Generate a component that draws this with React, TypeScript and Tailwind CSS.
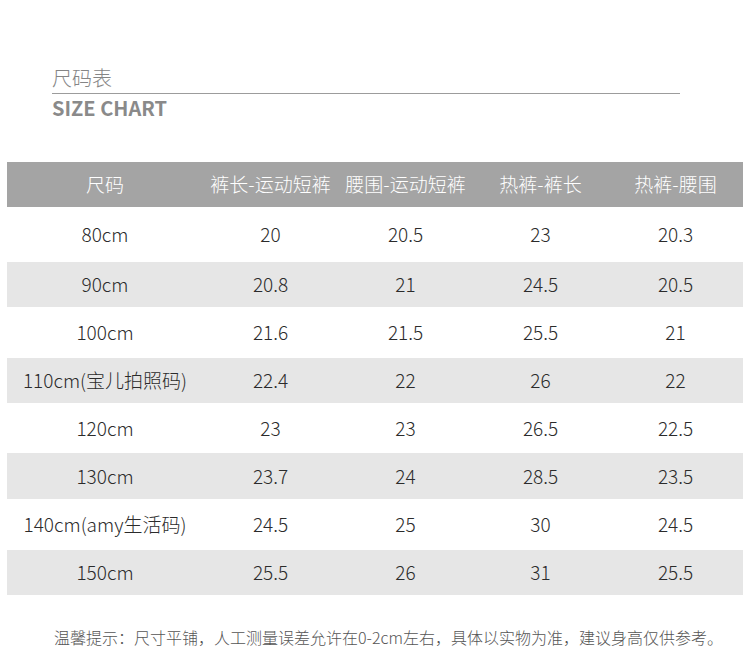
const headers = ["尺码", "裤长-运动短裤", "腰围-运动短裤", "热裤-裤长", "热裤-腰围"];

const rows: { cells: string[]; grey: boolean; h: string }[] = [
  { cells: ["80cm", "20", "20.5", "23", "20.3"], grey: false, h: "h-[55px]" },
  { cells: ["90cm", "20.8", "21", "24.5", "20.5"], grey: true, h: "h-[45px]" },
  { cells: ["100cm", "21.6", "21.5", "25.5", "21"], grey: false, h: "h-[51px]" },
  { cells: ["110cm(宝儿拍照码)", "22.4", "22", "26", "22"], grey: true, h: "h-[45px]" },
  { cells: ["120cm", "23", "23", "26.5", "22.5"], grey: false, h: "h-[50px]" },
  { cells: ["130cm", "23.7", "24", "28.5", "23.5"], grey: true, h: "h-[46px]" },
  { cells: ["140cm(amy生活码)", "24.5", "25", "30", "24.5"], grey: false, h: "h-[51px]" },
  { cells: ["150cm", "25.5", "26", "31", "25.5"], grey: true, h: "h-[45px]" },
];

const cols = "grid grid-cols-[196px_135px_135px_135px_135px]";

export default function App() {
  return (
    <div
      className="w-[750px] h-[650px] bg-white overflow-hidden"
      style={{ fontFamily: '"Noto Sans CJK SC", "Noto Sans", sans-serif' }}
    >
      {/* title */}
      <div className="pl-[52px] pt-[67px]">
        <p className="text-[20px] leading-[22px] font-light text-[#858585]">尺码表</p>
        <div className="mt-[4px] w-[628px] h-px bg-[#9c9c9c]" />
        <p className="mt-[2px] text-[20px] leading-[24px] font-bold text-[#8a8a8a]">SIZE CHART</p>
      </div>

      {/* table */}
      <div className="ml-[7px] mt-[42px] w-[736px]">
        <div className={`${cols} h-[45px] bg-[#a4a4a4] text-white`}>
          {headers.map((h) => (
            <div key={h} className="flex items-center justify-center text-[19px] font-light">
              {h}
            </div>
          ))}
        </div>
        {rows.map((r) => (
          <div
            key={r.cells[0]}
            className={`${cols} ${r.h} ${r.grey ? "bg-[#e6e6e6]" : "bg-white"} text-[#2b2b2b]`}
          >
            {r.cells.map((c, i) => (
              <div key={i} className="flex items-center justify-center text-[19px] font-light">
                {c}
              </div>
            ))}
          </div>
        ))}
      </div>

      {/* note */}
      <p className="mt-[32px] pl-[54px] text-[16px] leading-[20px] font-light text-[#555]">
        温馨提示：尺寸平铺，人工测量误差允许在0-2cm左右，具体以实物为准，建议身高仅供参考。
      </p>
    </div>
  );
}
